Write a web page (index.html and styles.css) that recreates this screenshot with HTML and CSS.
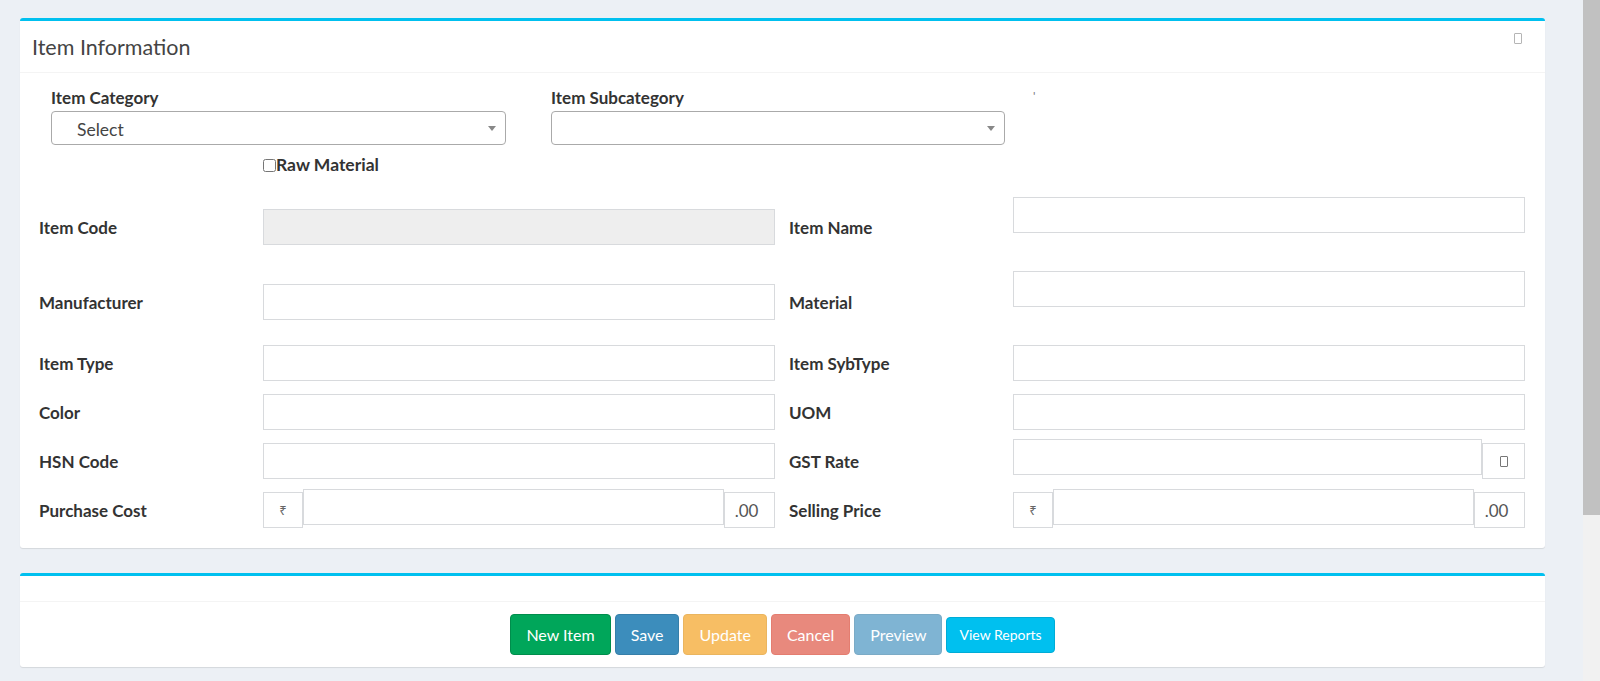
FILE: index.html
```html
<!DOCTYPE html>
<html lang="en">
<head>
<meta charset="utf-8">
<title>Item Information</title>
<link rel="stylesheet" href="styles.css">
</head>
<body>
<div class="page">
  <main class="content">
    <section class="box">
      <div class="box-header">
        <h3 class="box-title">Item Information</h3>
        <span class="box-tool"></span>
      </div>
      <div class="box-body">
        <div class="cat-row">
          <div class="cat-col">
            <label class="cat-label">Item Category</label>
            <div class="select"><span class="select-text">Select</span><span class="caret"></span></div>
          </div>
          <div class="cat-col">
            <label class="cat-label">Item Subcategory</label>
            <div class="select"><span class="select-text"></span><span class="caret"></span></div>
          </div>
          <span class="tick">'</span>
        </div>
        <label class="check-row"><input type="checkbox" class="check">Raw Material</label>

        <div class="form-rows">
          <div class="frow row-1">
            <span class="flabel">Item Code</span>
            <input type="text" class="input readonly" readonly>
            <span class="flabel right">Item Name</span>
            <input type="text" class="input raise-12">
          </div>
          <div class="frow row-2">
            <span class="flabel">Manufacturer</span>
            <input type="text" class="input">
            <span class="flabel right">Material</span>
            <input type="text" class="input raise-13">
          </div>
          <div class="frow row-3">
            <span class="flabel">Item Type</span>
            <input type="text" class="input">
            <span class="flabel right">Item SybType</span>
            <input type="text" class="input">
          </div>
          <div class="frow">
            <span class="flabel">Color</span>
            <input type="text" class="input">
            <span class="flabel right">UOM</span>
            <input type="text" class="input">
          </div>
          <div class="frow">
            <span class="flabel">HSN Code</span>
            <input type="text" class="input">
            <span class="flabel right">GST Rate</span>
            <div class="igroup">
              <input type="text" class="input ginput gst">
              <span class="addon addon-icon"><span class="glyph-box"></span></span>
            </div>
          </div>
          <div class="frow">
            <span class="flabel">Purchase Cost</span>
            <div class="igroup">
              <span class="addon addon-rupee">₹</span>
              <input type="text" class="input ginput">
              <span class="addon addon-dec">.00</span>
            </div>
            <span class="flabel right">Selling Price</span>
            <div class="igroup">
              <span class="addon addon-rupee">₹</span>
              <input type="text" class="input ginput">
              <span class="addon addon-dec">.00</span>
            </div>
          </div>
        </div>
      </div>
    </section>

    <section class="box box-actions">
      <div class="box-header empty"></div>
      <div class="actions">
        <button class="btn btn-success">New Item</button>
        <button class="btn btn-primary">Save</button>
        <button class="btn btn-warning" disabled>Update</button>
        <button class="btn btn-danger" disabled>Cancel</button>
        <button class="btn btn-primary" disabled>Preview</button>
        <button class="btn btn-info btn-sm">View Reports</button>
      </div>
    </section>
  </main>
  <div class="scrollbar"><div class="thumb"></div></div>
</div>
</body>
</html>
```

FILE: styles.css
```css
* { box-sizing: border-box; }

html, body {
  margin: 0;
  height: 100%;
}

body {
  background: #ecf0f5;
  font-family: "Lato", "Liberation Sans", sans-serif;
  font-size: 17px;
  color: #333;
  overflow: hidden;
}

.page {
  display: flex;
  height: 100vh;
}

.content {
  flex: 1;
  padding: 18px 38px 0 20px;
}

.scrollbar {
  width: 17px;
  background: #f1f1f1;
}

.thumb {
  height: 515px;
  background: #c1c1c1;
}

/* boxes */
.box {
  background: #fff;
  border-top: 3px solid #00c0ef;
  border-radius: 3px;
  box-shadow: 0 1px 1px rgba(0, 0, 0, 0.1);
}

.box-header {
  height: 52px;
  border-bottom: 1px solid #f4f4f4;
  display: flex;
  align-items: center;
  padding: 0 23px 0 12px;
}

.box-header.empty {
  height: 26px;
}

.box-title {
  margin: 0;
  font-size: 21.5px;
  font-weight: 400;
  color: #444;
}

.box-tool {
  margin-left: auto;
  align-self: flex-start;
  margin-top: 12px;
  width: 8px;
  height: 11px;
  border: 1px solid #b5b5b5;
  border-radius: 1px;
}

.box-body {
  padding: 14px 20px 20px 19px;
}

/* category selects */
.cat-row {
  display: flex;
  padding-left: 12px;
}

.cat-col {
  display: flex;
  flex-direction: column;
  width: 455px;
}

.cat-col + .cat-col {
  margin-left: 45px;
  width: 454px;
}

.cat-label {
  font-weight: 700;
  line-height: 22px;
  margin-bottom: 2px;
}

.select {
  height: 34px;
  border: 1px solid #aaa;
  border-radius: 4px;
  display: flex;
  align-items: center;
  justify-content: space-between;
  padding: 0 9px 0 25px;
  color: #444;
  font-size: 17.5px;
}

.select-text {
  line-height: 32px;
  padding-top: 3px;
}

.caret {
  width: 0;
  height: 0;
  border-top: 5px solid #888;
  border-left: 4px solid transparent;
  border-right: 4px solid transparent;
}

.tick {
  margin-left: 28px;
  margin-top: 3px;
  font-size: 12px;
  line-height: 12px;
  color: #777;
  align-self: flex-start;
}

.check-row {
  display: flex;
  align-items: center;
  margin: 9px 0 0 224px;
  font-weight: 700;
  font-size: 17.5px;
  line-height: 22px;
}

.check {
  margin: 0;
  width: 13px;
  height: 13px;
}

/* form grid */
.form-rows {
  display: flex;
  flex-direction: column;
  gap: 13px;
  margin-top: 33px;
}

.frow {
  display: grid;
  grid-template-columns: 224px 512px 238px 512px;
  align-items: center;
  height: 36px;
}

.row-2 { margin-top: 26px; }
.row-3 { margin-top: 12px; }

.flabel {
  font-weight: 700;
  color: #333;
}

.flabel.right {
  padding-left: 14px;
}

.input {
  display: block;
  width: 100%;
  height: 36px;
  border: 1px solid #d8dadd;
  background: #fff;
  font: inherit;
  padding: 0 12px;
  margin: 0;
  outline: none;
}

.input.readonly {
  background: #eee;
}

.raise-12 { margin-top: -24px; }
.raise-13 { margin-top: -26px; }

.igroup {
  display: flex;
  align-items: flex-end;
  height: 36px;
}

.ginput {
  flex: 1;
  width: auto;
  min-width: 0;
  margin-bottom: 3px;
}

.ginput.gst {
  margin-bottom: 4px;
}

.addon {
  height: 36px;
  border: 1px solid #d8dadd;
  display: flex;
  align-items: center;
  justify-content: center;
  color: #555;
  background: #fff;
}

.addon-rupee {
  width: 40px;
  font-family: "Noto Sans", "DejaVu Sans", sans-serif;
  font-size: 13px;
  color: #666;
}

.addon-dec {
  width: 51px;
  font-size: 17px;
  padding-right: 6px;
}

.addon-icon {
  width: 43px;
}

.glyph-box {
  width: 8px;
  height: 11px;
  border: 1px solid #777;
  border-radius: 1px;
}

/* actions */
.box-actions {
  margin-top: 25px;
}

.actions {
  display: flex;
  justify-content: center;
  align-items: center;
  gap: 4px;
  padding: 12px 0;
}

.btn {
  font: inherit;
  font-size: 16px;
  height: 41px;
  padding: 0 15px;
  border: 1px solid transparent;
  border-radius: 4px;
  color: #fff;
  cursor: pointer;
}

.btn:disabled {
  opacity: 0.65;
  cursor: not-allowed;
}

.btn-success { background: #00a65a; border-color: #008d4c; }
.btn-primary { background: #3c8dbc; border-color: #367fa9; }
.btn-warning { background: #f39c12; border-color: #e08e0b; }
.btn-danger { background: #dd4b39; border-color: #d73925; }
.btn-info { background: #00c0ef; border-color: #00acd6; }

.btn-sm {
  height: 36px;
  font-size: 14px;
  padding: 0 12px;
}
```
